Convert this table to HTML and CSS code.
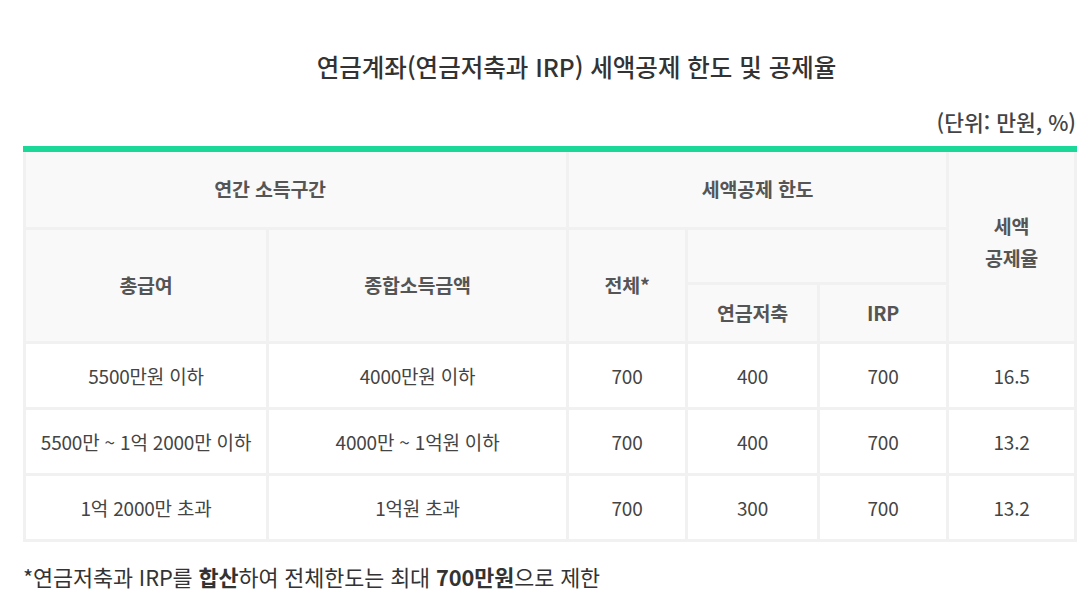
FILE: index.html
```html
<!DOCTYPE html>
<html lang="ko">
<head>
<meta charset="utf-8">
<link rel="stylesheet" href="styles.css">
</head>
<body>
<div class="wrap">
  <h1 class="title">연금계좌(연금저축과 IRP) 세액공제 한도 및 공제율</h1>
  <p class="unit">(단위: 만원, %)</p>
  <table class="tbl">
    <colgroup>
      <col class="c1"><col class="c2"><col class="c3"><col class="c4"><col class="c5"><col class="c6">
    </colgroup>
    <thead>
      <tr class="h1">
        <th colspan="2" class="group-income">연간 소득구간</th>
        <th colspan="3">세액공제 한도</th>
        <th rowspan="3" class="rate">세액<br>공제율</th>
      </tr>
      <tr class="h2">
        <th rowspan="2">총급여</th>
        <th rowspan="2">종합소득금액</th>
        <th rowspan="2">전체*</th>
        <th colspan="2"></th>
      </tr>
      <tr class="h3">
        <th>연금저축</th>
        <th>IRP</th>
      </tr>
    </thead>
    <tbody>
      <tr><td>5500만원 이하</td><td>4000만원 이하</td><td>700</td><td>400</td><td>700</td><td>16.5</td></tr>
      <tr><td>5500만 ~ 1억 2000만 이하</td><td>4000만 ~ 1억원 이하</td><td>700</td><td>400</td><td>700</td><td>13.2</td></tr>
      <tr><td>1억 2000만 초과</td><td>1억원 초과</td><td>700</td><td>300</td><td>700</td><td>13.2</td></tr>
    </tbody>
  </table>
  <p class="note">*연금저축과 IRP를 <b>합산</b>하여 전체한도는 최대 <b>700만원</b>으로 제한</p>
</div>
</body>
</html>
```

FILE: styles.css
```css
html, body {
  margin: 0;
  padding: 0;
  background: #fff;
}
body {
  font-family: "Noto Sans CJK KR", "Noto Sans", sans-serif;
  color: #333;
}
.wrap {
  width: 1053px;
  padding: 0 0 0 23px;
}
.title {
  margin: 0;
  padding: 50px 0 0 54px;
  height: 34px;
  line-height: 34px;
  font-size: 24.5px;
  font-weight: 500;
  text-align: center;
  color: #333;
  letter-spacing: 0;
}
.unit {
  margin: 23px 0 0;
  height: 30px;
  line-height: 30px;
  font-size: 21.5px;
  font-weight: 500;
  text-align: right;
  color: #444;
  letter-spacing: 0;
}
.tbl {
  margin-top: 9px;
  width: 1051px;
  border-collapse: collapse;
  table-layout: fixed;
  border-top: 6px solid #1bd898;
}
.c1 { width: 243px; }
.c2 { width: 300px; }
.c3 { width: 119px; }
.c4 { width: 132px; }
.c5 { width: 129px; }
.c6 { width: 128px; }
.tbl th, .tbl td {
  border: 3px solid #f1f1f1;
  text-align: center;
  vertical-align: middle;
  padding: 0;
  letter-spacing: -0.2px;
}
.tbl th {
  background: #f9f9f9;
  font-size: 19.5px;
  font-weight: 700;
  color: #555;
  line-height: 32px;
}
.tbl th.group-income { padding-right: 52px; }
.tbl th.rate { padding-bottom: 8px; }
.tbl td {
  background: #fff;
  font-size: 19px;
  font-weight: 400;
  color: #444;
}
.tbl .h1 { height: 79px; }
.tbl .h2 { height: 55px; }
.tbl .h3 { height: 59px; }
.tbl tbody tr { height: 66px; }
.note {
  margin: 20px 0 0;
  font-size: 21.8px;
  line-height: 30px;
  color: #333;
  letter-spacing: -0.1px;
}
.note b { font-weight: 700; }
```
